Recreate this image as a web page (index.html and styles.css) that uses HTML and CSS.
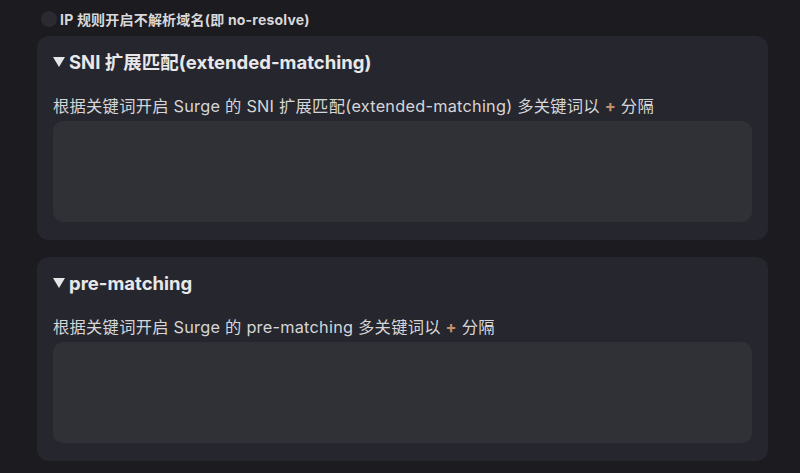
FILE: index.html
```html
<!DOCTYPE html>
<html lang="zh">
<head>
<meta charset="utf-8">
<link rel="stylesheet" href="styles.css">
</head>
<body>
<div class="page">
  <div class="toggle-row">
    <span class="radio"></span>
    <span class="toggle-label">IP 规则开启不解析域名(即 no-resolve)</span>
  </div>
  <section class="card">
    <h2 class="card-title"><svg class="caret" width="12" height="10" viewBox="0 0 12 10"><path d="M0 0 H12 L6 10 Z" fill="#e6e6e8"/></svg>SNI 扩展匹配(extended-matching)</h2>
    <p class="desc">根据关键词开启 Surge 的 SNI 扩展匹配(extended-matching) 多关键词以 <span class="plus">+</span> 分隔</p>
    <textarea class="field"></textarea>
  </section>
  <section class="card">
    <h2 class="card-title"><svg class="caret" width="12" height="10" viewBox="0 0 12 10"><path d="M0 0 H12 L6 10 Z" fill="#e6e6e8"/></svg>pre-matching</h2>
    <p class="desc">根据关键词开启 Surge 的 pre-matching 多关键词以 <span class="plus">+</span> 分隔</p>
    <textarea class="field"></textarea>
  </section>
</div>
</body>
</html>
```
FILE: styles.css
```css
* { box-sizing: border-box; }
html, body {
  margin: 0;
  background: #1c1b20;
  font-family: "Inter", "Noto Sans CJK SC", sans-serif;
  color: #e6e6e8;
}
.page {
  padding: 10px 32px 0 37px;
  display: flex;
  flex-direction: column;
}
.toggle-row {
  display: flex;
  align-items: center;
  gap: 3px;
  height: 18px;
  padding-left: 4px;
  margin-bottom: 8px;
}
.radio {
  width: 16px;
  height: 16px;
  border-radius: 50%;
  background: #2a2a30;
}
.toggle-label {
  font-size: 14px;
  font-weight: 700;
  letter-spacing: 0.2px;
  color: #d8d8da;
}
.card {
  background: #26262e;
  border-radius: 12px;
  padding: 14px 16px 18px;
  margin-bottom: 17px;
  display: flex;
  flex-direction: column;
}
.card-title {
  margin: 0;
  font-size: 18.5px;
  font-weight: 700;
  line-height: 24px;
  display: flex;
  align-items: center;
  color: #e8e8ea;
}
.caret {
  margin-right: 4px;
}
.desc {
  margin: 22px 0 5px;
  font-size: 16.3px;
  line-height: 20px;
  letter-spacing: 0.25px;
  color: #d6d6d8;
}
.plus {
  color: #c58e6c;
  font-weight: 700;
}
.field {
  height: 101px;
  background: #303137;
  border: none;
  border-radius: 10px;
  resize: none;
  outline: none;
  width: 100%;
}
```
